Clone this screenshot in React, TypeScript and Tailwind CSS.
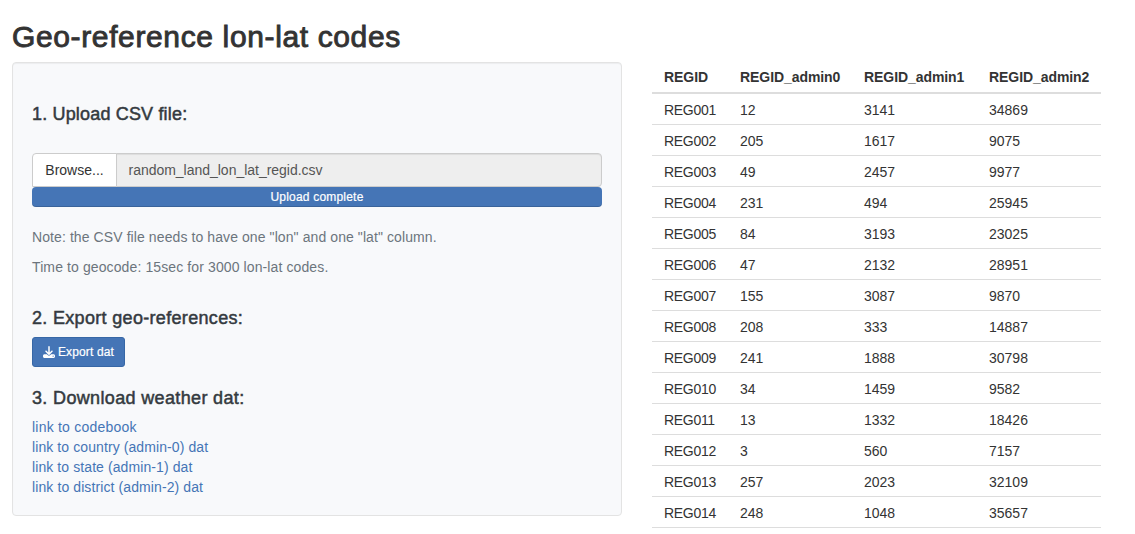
import React from "react";
import { FaDownload } from "react-icons/fa6";

const columns = ["REGID", "REGID_admin0", "REGID_admin1", "REGID_admin2"];

const rows = [
  ["REG001", "12", "3141", "34869"],
  ["REG002", "205", "1617", "9075"],
  ["REG003", "49", "2457", "9977"],
  ["REG004", "231", "494", "25945"],
  ["REG005", "84", "3193", "23025"],
  ["REG006", "47", "2132", "28951"],
  ["REG007", "155", "3087", "9870"],
  ["REG008", "208", "333", "14887"],
  ["REG009", "241", "1888", "30798"],
  ["REG010", "34", "1459", "9582"],
  ["REG011", "13", "1332", "18426"],
  ["REG012", "3", "560", "7157"],
  ["REG013", "257", "2023", "32109"],
  ["REG014", "248", "1048", "35657"],
];

const links = [
  { label: "link to codebook", tracking: "tracking-[0.22px]" },
  { label: "link to country (admin-0) dat", tracking: "tracking-[0.09px]" },
  { label: "link to state (admin-1) dat", tracking: "tracking-[0.09px]" },
  { label: "link to district (admin-2) dat", tracking: "tracking-[0.1px]" },
];

function Heading({ tracking, children }: { tracking: string; children: React.ReactNode }) {
  return (
    <h4 className={`text-[18px] leading-5 whitespace-nowrap [-webkit-text-stroke:0.5px_#343a40] ${tracking}`}>
      {children}
    </h4>
  );
}

function UploadPanel() {
  return (
    <section className="h-[454px] w-[610px] shrink-0 rounded-[4px] border border-[#e3e3e3] bg-[#f8f9fb] px-[19px] pt-[41px] text-[#343a40] shadow-[inset_0_1px_1px_rgba(0,0,0,0.05)]">
      <Heading tracking="tracking-[0.17px]">1. Upload CSV file:</Heading>
      <div className="mt-[29px] flex h-[34px] text-[14px] leading-5">
        <button className="w-[85px] rounded-tl-[4px] border border-[#cccccc] bg-white text-[#333333]">
          Browse...
        </button>
        <div className="-ml-px flex flex-1 items-center rounded-r-[4px] border border-[#cccccc] bg-[#eeeeee] pl-[11.5px] tracking-[-0.02px] text-[#555555] shadow-[inset_0_1px_1px_rgba(0,0,0,0.075)]">
          random_land_lon_lat_regid.csv
        </div>
      </div>
      <div className="h-5 rounded-[4px] bg-[#4575b6] text-center text-[12px] leading-5 tracking-[0.2px] text-white shadow-[inset_0_-1px_0_rgba(0,0,0,0.15)] [-webkit-text-stroke:0.2px_#ffffff]">
        Upload complete
      </div>
      <div className="mt-5 flex flex-col gap-2.5 text-[14px] leading-5 text-[#6c757d]">
        <p className="tracking-[0.09px]">Note: the CSV file needs to have one "lon" and one "lat" column.</p>
        <p className="tracking-[0.11px]">Time to geocode: 15sec for 3000 lon-lat codes.</p>
      </div>
      <div className="mt-[31px]">
        <Heading tracking="tracking-[0.32px]">2. Export geo-references:</Heading>
      </div>
      <button className="mt-[9px] flex h-[30px] w-[93px] items-center justify-center gap-[3px] rounded-[3px] border border-[#3767a6] bg-[#4575b6] text-[12px] leading-[18px] tracking-[0.15px] whitespace-nowrap text-white [-webkit-text-stroke:0.2px_#ffffff]">
        <FaDownload className="size-3" />
        Export dat
      </button>
      <div className="mt-[21px]">
        <Heading tracking="tracking-[0.35px]">3. Download weather dat:</Heading>
      </div>
      <nav className="mt-[9px] flex flex-col items-start text-[14px] leading-5 text-[#4575b6]">
        {links.map(({ label, tracking }) => (
          <a key={label} href="#" className={tracking}>
            {label}
          </a>
        ))}
      </nav>
    </section>
  );
}

function RegionTable() {
  return (
    <table className="w-[449px] table-fixed border-separate border-spacing-0 text-left text-[14px] leading-5 text-[#333333]">
      <colgroup>
        <col className="w-[76px]" />
        <col className="w-[124px]" />
        <col className="w-[125px]" />
        <col className="w-[124px]" />
      </colgroup>
      <thead>
        <tr className="h-8">
          {columns.map((name) => (
            <th key={name} className="border-b-2 border-[#dddddd] px-3 py-0 font-bold tracking-[-0.07px]">
              {name}
            </th>
          ))}
        </tr>
      </thead>
      <tbody>
        {rows.map((row) => (
          <tr key={row[0]} className="h-[31px]">
            {row.map((cell, i) => (
              <td
                key={i}
                className={`border-b border-[#dddddd] px-3 pt-px pb-0 ${i === 0 ? "tracking-[-0.3px]" : ""}`}
              >
                {cell}
              </td>
            ))}
          </tr>
        ))}
      </tbody>
    </table>
  );
}

export default function App() {
  return (
    <main className="h-[534px] w-[1135px] overflow-hidden bg-white pl-3 font-['Liberation_Sans',sans-serif]">
      <h1 className="h-[62px] pt-5 text-[30px] leading-[33px] tracking-[0.63px] text-[#333333] [-webkit-text-stroke:0.9px_#333333]">
        Geo-reference lon-lat codes
      </h1>
      <div className="flex items-start gap-[30px]">
        <UploadPanel />
        <RegionTable />
      </div>
    </main>
  );
}
